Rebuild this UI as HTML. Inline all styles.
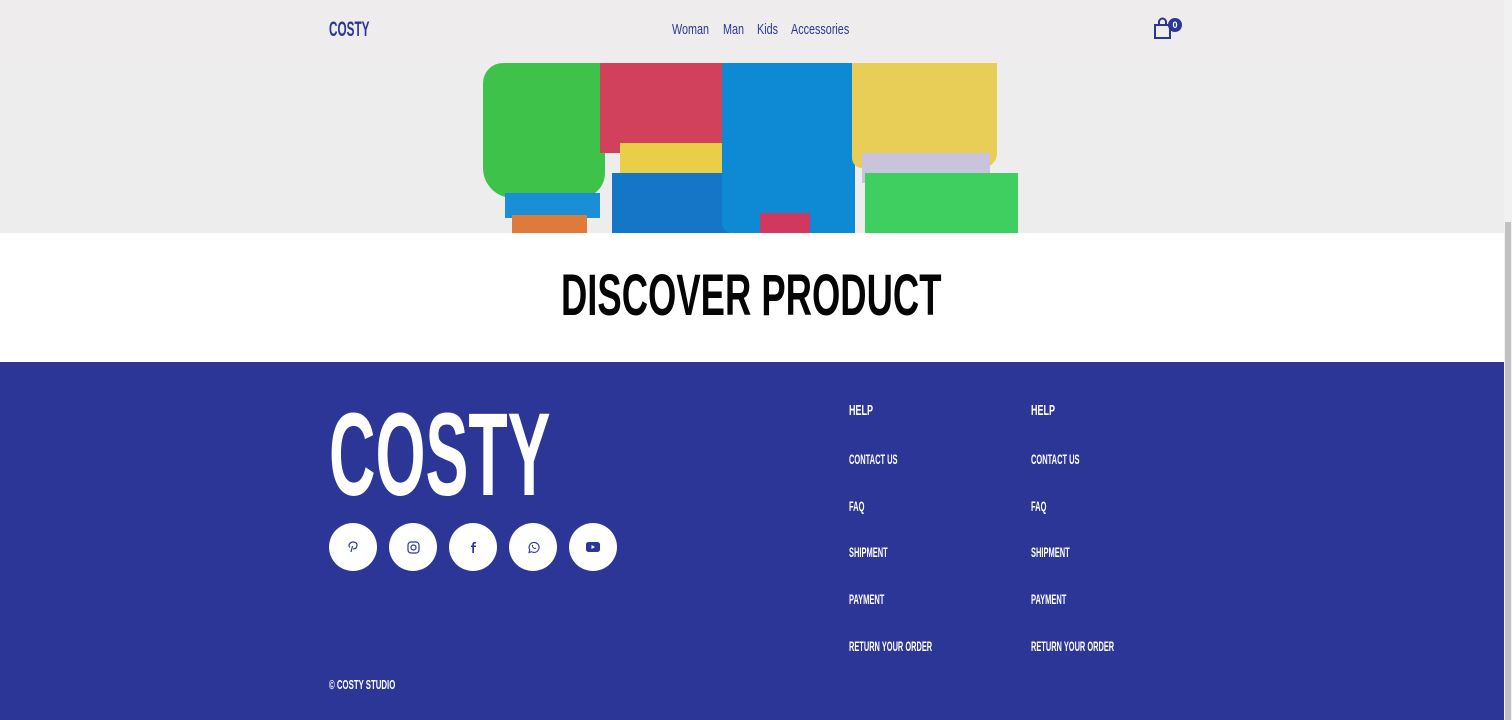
<!DOCTYPE html>
<html><head><meta charset="utf-8"><style>
*{margin:0;padding:0;box-sizing:border-box}
body{width:1512px;height:720px;overflow:hidden;position:relative;font-family:"Liberation Sans",sans-serif;background:#fff}
.a{position:absolute;white-space:nowrap}
.c{transform-origin:0 0;display:inline-block}
.hdr{position:absolute;left:0;top:0;width:1504px;height:63px;background:#eeecec}
.hero{position:absolute;left:0;top:63px;width:1504px;height:170px;background:#eeeded;overflow:hidden}
.foot{position:absolute;left:0;top:362px;width:1504px;height:358px;background:#2b3697}
.sb{position:absolute;left:1504px;top:0;width:8px;height:720px;background:#f1f1f1}
.sb i{position:absolute;left:1px;top:222px;width:6px;height:498px;background:#c1c1c1}
.nav{color:#2b3697;font-size:15px;top:21px}
.fl{color:#fff;font-weight:bold;font-size:14px}
.circ{position:absolute;top:523px;width:48px;height:48px;border-radius:50%;background:#fff;display:flex;align-items:center;justify-content:center}
</style></head><body>
<div class="hdr"></div>
<div class="a" style="left:329px;top:18px;color:#2b3697;font-weight:bold;font-size:21px"><span class="c" style="transform:scaleX(.56)">COSTY</span></div>
<div class="a nav" style="left:672px"><span class="c" style="transform:scaleX(.72)">Woman</span></div>
<div class="a nav" style="left:723px"><span class="c" style="transform:scaleX(.72)">Man</span></div>
<div class="a nav" style="left:757px"><span class="c" style="transform:scaleX(.72)">Kids</span></div>
<div class="a nav" style="left:791px"><span class="c" style="transform:scaleX(.72)">Accessories</span></div>
<svg class="a" style="left:1153px;top:17px" width="32" height="24" viewBox="0 0 32 24">
<path d="M2 8h15v13H2z" fill="none" stroke="#2b3697" stroke-width="2"/>
<path d="M6 8V5a3.5 3.5 0 0 1 7 0v3" fill="none" stroke="#2b3697" stroke-width="2"/>
<circle cx="22" cy="8" r="7" fill="#2b3697"/>
<text x="22" y="11" font-size="9" font-weight="bold" fill="#fff" text-anchor="middle" font-family="Liberation Sans">0</text>
</svg>
<div class="hero">
<div class="a" style="left:483px;top:0;width:122px;height:135px;background:#3fc24a;border-radius:20px 0 25px 30px"></div>
<div class="a" style="left:505px;top:130px;width:95px;height:25px;background:#1a8fd6"></div>
<div class="a" style="left:512px;top:152px;width:75px;height:20px;background:#e07a3a"></div>
<div class="a" style="left:600px;top:0;width:162px;height:90px;background:#d2415c"></div>
<div class="a" style="left:620px;top:80px;width:102px;height:45px;background:#e9cf48"></div>
<div class="a" style="left:612px;top:110px;width:118px;height:60px;background:#1575c6"></div>
<div class="a" style="left:722px;top:0;width:133px;height:170px;background:#0e8ad4;border-radius:0 0 0 10px"></div>
<div class="a" style="left:760px;top:150px;width:50px;height:20px;background:#d13860"></div>
<div class="a" style="left:852px;top:0;width:145px;height:105px;background:#e8cd57;border-radius:0 0 15px 10px"></div>
<div class="a" style="left:862px;top:90px;width:128px;height:30px;background:#c9c3dc"></div>
<div class="a" style="left:865px;top:110px;width:153px;height:60px;background:#3fcf60"></div>
</div>
<div class="a" style="left:561px;top:262px;font-weight:bold;font-size:58px;color:#050505"><span class="c" style="transform:scaleX(.628)">DISCOVER PRODUCT</span></div>
<div class="foot"></div>
<div class="a" style="left:329px;top:396px;font-weight:bold;font-size:118px;color:#fff;line-height:1"><span class="c" style="transform:scaleX(.545)">COSTY</span></div>
<div class="circ" style="left:329px"><svg width="12" height="12" viewBox="0 0 12 12"><path d="M4 11l1.5-6M6 8c3 0 4-2 4-4S8 1 6 1 2 2.5 2 4.5c0 1 .5 1.5 1 1.8" fill="none" stroke="#2b3697" stroke-width="1.2"/></svg></div>
<div class="circ" style="left:389px"><svg width="13" height="13" viewBox="0 0 13 13"><rect x="1" y="1" width="11" height="11" rx="3" fill="none" stroke="#2b3697" stroke-width="1.2"/><circle cx="6.5" cy="6.5" r="2.5" fill="none" stroke="#2b3697" stroke-width="1.2"/></svg></div>
<div class="circ" style="left:449px"><svg width="12" height="12" viewBox="0 0 12 12"><path d="M7 12V6h2V4.5H7V3.5c0-.6.3-1 1-1h1V1H7.5C6 1 5.3 2 5.3 3.3V4.5H4V6h1.3v6z" fill="#2b3697"/></svg></div>
<div class="circ" style="left:509px"><svg width="13" height="13" viewBox="0 0 13 13"><path d="M2 11.5l.8-2.5A5 5 0 1 1 4.5 10.7z" fill="none" stroke="#2b3697" stroke-width="1.1"/><path d="M4.8 4.2c0 2 1.8 3.8 3.8 3.8l.6-.9-1.2-.6-.5.5c-.8-.3-1.4-.9-1.7-1.7l.5-.5-.6-1.2z" fill="#2b3697"/></svg></div>
<div class="circ" style="left:569px"><svg width="14" height="10" viewBox="0 0 14 10"><rect width="14" height="10" rx="2.5" fill="#2b3697"/><path d="M5.5 3v4l3.5-2z" fill="#fff"/></svg></div>
<div class="a fl" style="left:329px;top:677px;font-size:13px"><span class="c" style="transform:scaleX(.6)">© COSTY STUDIO</span></div>
<div class="a fl" style="left:849px;top:402px;font-size:15px"><span class="c" style="transform:scaleX(.6)">HELP</span></div>
<div class="a fl" style="left:849px;top:451px"><span class="c" style="transform:scaleX(.535)">CONTACT US</span></div>
<div class="a fl" style="left:849px;top:498px"><span class="c" style="transform:scaleX(.535)">FAQ</span></div>
<div class="a fl" style="left:849px;top:544px"><span class="c" style="transform:scaleX(.535)">SHIPMENT</span></div>
<div class="a fl" style="left:849px;top:591px"><span class="c" style="transform:scaleX(.535)">PAYMENT</span></div>
<div class="a fl" style="left:849px;top:638px"><span class="c" style="transform:scaleX(.53)">RETURN YOUR ORDER</span></div>
<div class="a fl" style="left:1031px;top:402px;font-size:15px"><span class="c" style="transform:scaleX(.6)">HELP</span></div>
<div class="a fl" style="left:1031px;top:451px"><span class="c" style="transform:scaleX(.535)">CONTACT US</span></div>
<div class="a fl" style="left:1031px;top:498px"><span class="c" style="transform:scaleX(.535)">FAQ</span></div>
<div class="a fl" style="left:1031px;top:544px"><span class="c" style="transform:scaleX(.535)">SHIPMENT</span></div>
<div class="a fl" style="left:1031px;top:591px"><span class="c" style="transform:scaleX(.535)">PAYMENT</span></div>
<div class="a fl" style="left:1031px;top:638px"><span class="c" style="transform:scaleX(.53)">RETURN YOUR ORDER</span></div>
<div class="sb"><i></i></div>
</body></html>
